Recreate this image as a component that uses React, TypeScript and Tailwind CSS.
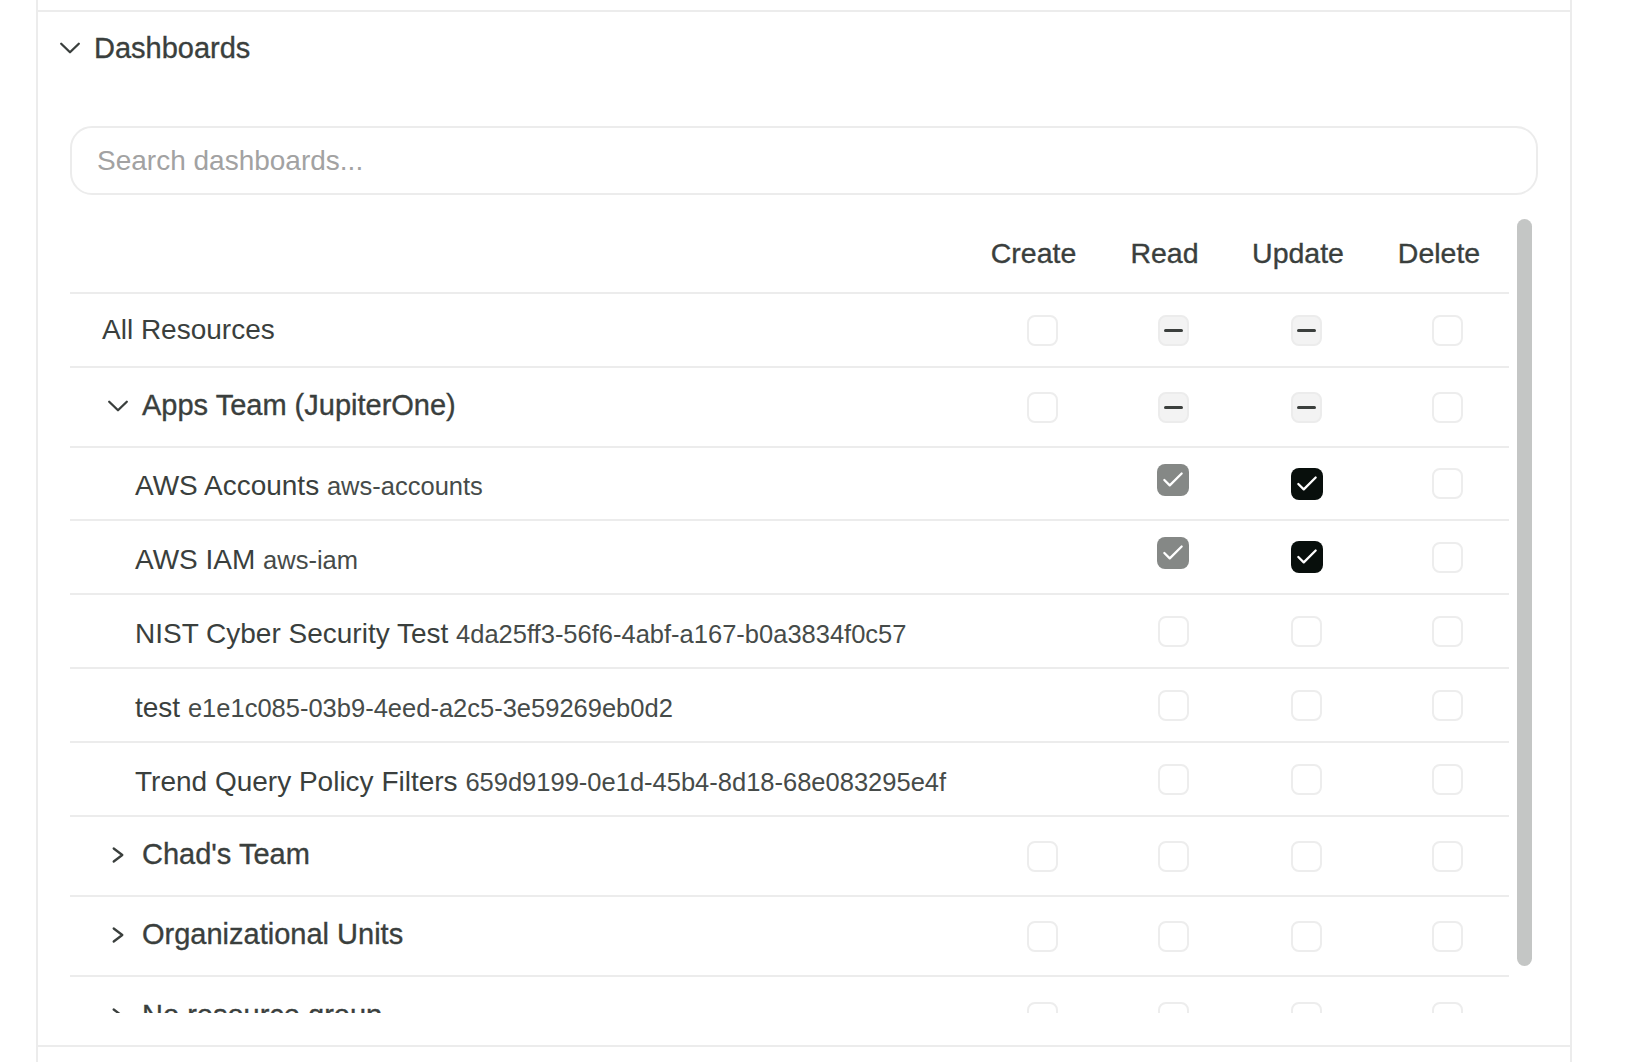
import React from "react";
import { Check } from "lucide-react";

type BoxState = "empty" | "mixed" | "checkedGray" | "checked" | "none";

type Row = {
  kind: "all" | "group" | "leaf";
  label: string;
  id?: string;
  open?: boolean;
  h: string;
  boxes: BoxState[];
};

const rows: Row[] = [
  { kind: "all", label: "All Resources", h: "h-[74px]", boxes: ["empty", "mixed", "mixed", "empty"] },
  { kind: "group", label: "Apps Team (JupiterOne)", open: true, h: "h-[80px]", boxes: ["empty", "mixed", "mixed", "empty"] },
  { kind: "leaf", label: "AWS Accounts", id: "aws-accounts", h: "h-[73px]", boxes: ["none", "checkedGray", "checked", "empty"] },
  { kind: "leaf", label: "AWS IAM", id: "aws-iam", h: "h-[74px]", boxes: ["none", "checkedGray", "checked", "empty"] },
  { kind: "leaf", label: "NIST Cyber Security Test", id: "4da25ff3-56f6-4abf-a167-b0a3834f0c57", h: "h-[74px]", boxes: ["none", "empty", "empty", "empty"] },
  { kind: "leaf", label: "test", id: "e1e1c085-03b9-4eed-a2c5-3e59269eb0d2", h: "h-[74px]", boxes: ["none", "empty", "empty", "empty"] },
  { kind: "leaf", label: "Trend Query Policy Filters", id: "659d9199-0e1d-45b4-8d18-68e083295e4f", h: "h-[74px]", boxes: ["none", "empty", "empty", "empty"] },
  { kind: "group", label: "Chad's Team", h: "h-[80px]", boxes: ["empty", "empty", "empty", "empty"] },
  { kind: "group", label: "Organizational Units", h: "h-[80px]", boxes: ["empty", "empty", "empty", "empty"] },
  { kind: "group", label: "No resource group", h: "h-[80px]", boxes: ["empty", "empty", "empty", "empty"] },
];

const ChevronDown = () => (
  <svg width="32" height="32" viewBox="0 0 32 32" fill="none" stroke="currentColor" strokeWidth="2.3" strokeLinecap="round" strokeLinejoin="round">
    <path d="M7.2 11.7 16 20.3l8.8-8.6" />
  </svg>
);

const ChevronRight = () => (
  <svg width="32" height="32" viewBox="0 0 32 32" fill="none" stroke="currentColor" strokeWidth="2.3" strokeLinecap="round" strokeLinejoin="round">
    <path d="M11.7 9.5 20.3 16l-8.6 6.5" />
  </svg>
);

const Box = ({ state }: { state: BoxState }) => {
  if (state === "none") return null;
  if (state === "mixed")
    return (
      <span className="flex h-[31px] w-[31px] items-center justify-center rounded-[8px] border-2 border-[#ececec] bg-[#f3f3f3]">
        <span className="h-[3px] w-[19px] rounded-full bg-[#3b3f3d]" />
      </span>
    );
  if (state === "checkedGray")
    return (
      <span className="flex h-[32px] w-[32px] -translate-y-1 items-center justify-center rounded-[8px] bg-[#858886] text-white">
        <Check size={26} strokeWidth={2.1} />
      </span>
    );
  if (state === "checked")
    return (
      <span className="flex h-[32px] w-[32px] items-center justify-center rounded-[8px] bg-[#080f0c] text-white">
        <Check size={26} strokeWidth={2.1} />
      </span>
    );
  return <span className="block h-[31px] w-[31px] rounded-[8px] border-2 border-[#ededed] bg-white" />;
};

const cols = "grid grid-cols-[1fr_137px_125px_142px_140px]";
const medium = "[-webkit-text-stroke:0.35px_#3b403e]";

export default function App() {
  return (
    <div className="min-h-screen bg-white font-['Liberation_Sans',Arial,sans-serif] text-[#3a3f3d]">
      <div className="ml-[36px] w-[1536px] border-x-2 border-[#ececec]">
        {/* tail of the previous section */}
        <div className="h-[10px]" />

        <section className="border-y-2 border-[#ececec]">
          {/* accordion header */}
          <div className="flex h-[72px] items-center gap-2 pl-4">
            <ChevronDown />
            <h2 className={`text-[29px] leading-none ${medium}`}>Dashboards</h2>
          </div>

          <div className="px-8 pt-[42px] pb-[32px]">
            <input
              type="text"
              placeholder="Search dashboards..."
              className="block h-[69px] w-full rounded-[22px] border-2 border-[#ececec] bg-white px-[25px] text-[28px] text-[#3a3f3d] outline-none placeholder:text-[#a2a2a2]"
            />

            <div className="mt-6 mr-[6px] flex h-[794px] gap-[8px]">
              <div className="min-w-0 flex-1 overflow-hidden">
                {/* column headings */}
                <div className={`${cols} h-[75px] items-center border-b-2 border-[#ececec] pb-[4px] text-[28.5px] leading-none ${medium}`}>
                  <span />
                  <span className="text-center">Create</span>
                  <span className="text-center">Read</span>
                  <span className="text-center">Update</span>
                  <span className="text-center">Delete</span>
                </div>

                {rows.map((r, i) => (
                  <div
                    key={r.label}
                    className={`${cols} ${r.h} items-center ${i < rows.length - 1 ? "border-b-2 border-[#ececec]" : ""}`}
                  >
                    {r.kind === "all" && <span className="pl-8 text-[28px] leading-none">{r.label}</span>}
                    {r.kind === "group" && (
                      <span className="flex items-center gap-2 pb-[3px] pl-8">
                        {r.open ? <ChevronDown /> : <ChevronRight />}
                        <span className={`text-[29px] leading-none whitespace-nowrap ${medium}`}>{r.label}</span>
                      </span>
                    )}
                    {r.kind === "leaf" && (
                      <span className="pt-[5px] pl-[65px] text-[28px] leading-none whitespace-nowrap">
                        {r.label} <span className="text-[25.5px] text-[#464b49]">{r.id}</span>
                      </span>
                    )}
                    {r.boxes.map((b, j) => (
                      <span key={j} className="flex justify-center pl-[17px]">
                        <Box state={b} />
                      </span>
                    ))}
                  </div>
                ))}
              </div>

              {/* scrollbar */}
              <div className="w-[15px] shrink-0">
                <div className="h-[747px] rounded-full bg-[#c4c6c5]" />
              </div>
            </div>
          </div>
        </section>

        <div className="h-[16px]" />
      </div>
    </div>
  );
}
